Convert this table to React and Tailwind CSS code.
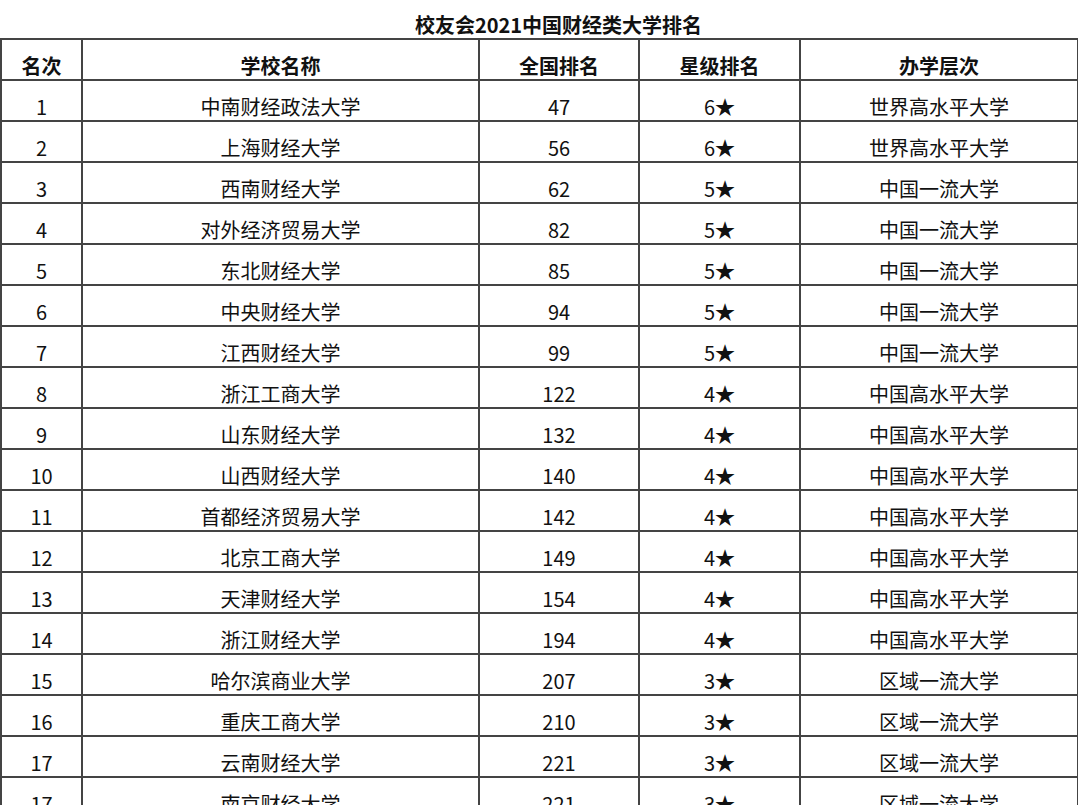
const rows = [
  ["1", "中南财经政法大学", "47", "6★", "世界高水平大学"],
  ["2", "上海财经大学", "56", "6★", "世界高水平大学"],
  ["3", "西南财经大学", "62", "5★", "中国一流大学"],
  ["4", "对外经济贸易大学", "82", "5★", "中国一流大学"],
  ["5", "东北财经大学", "85", "5★", "中国一流大学"],
  ["6", "中央财经大学", "94", "5★", "中国一流大学"],
  ["7", "江西财经大学", "99", "5★", "中国一流大学"],
  ["8", "浙江工商大学", "122", "4★", "中国高水平大学"],
  ["9", "山东财经大学", "132", "4★", "中国高水平大学"],
  ["10", "山西财经大学", "140", "4★", "中国高水平大学"],
  ["11", "首都经济贸易大学", "142", "4★", "中国高水平大学"],
  ["12", "北京工商大学", "149", "4★", "中国高水平大学"],
  ["13", "天津财经大学", "154", "4★", "中国高水平大学"],
  ["14", "浙江财经大学", "194", "4★", "中国高水平大学"],
  ["15", "哈尔滨商业大学", "207", "3★", "区域一流大学"],
  ["16", "重庆工商大学", "210", "3★", "区域一流大学"],
  ["17", "云南财经大学", "221", "3★", "区域一流大学"],
  ["17", "南京财经大学", "221", "3★", "区域一流大学"],
];

const headers = ["名次", "学校名称", "全国排名", "星级排名", "办学层次"];

const App = () => {
  return (
    <div
      className="w-[1078px] h-[805px] overflow-hidden bg-white text-[#111]"
      style={{ fontFamily: '"Noto Sans CJK SC", "Noto Sans", sans-serif' }}
    >
      <h1 className="h-[38px] pl-[40px] w-[1077px] text-center text-[20px] font-bold leading-[26px] pt-[12px]">
        校友会2021中国财经类大学排名
      </h1>
      <table className="w-[1077px] table-fixed border-collapse text-[20px]">
        <colgroup>
          <col className="w-[81px]" />
          <col className="w-[397px]" />
          <col className="w-[160px]" />
          <col className="w-[161px]" />
          <col className="w-[278px]" />
        </colgroup>
        <thead>
          <tr className="h-[41px]">
            {headers.map((h) => (
              <th
                key={h}
                className="border-2 border-[#444] text-center align-bottom font-bold leading-[24px] p-0 pb-[1px]"
              >
                {h}
              </th>
            ))}
          </tr>
        </thead>
        <tbody>
          {rows.map((r, i) => (
            <tr key={i} className="h-[41px]">
              {r.map((c, j) => (
                <td
                  key={j}
                  className="border-2 border-[#444] text-center align-bottom leading-[24px] p-0 pb-[1px]"
                >
                  {c}
                </td>
              ))}
            </tr>
          ))}
        </tbody>
      </table>
    </div>
  );
};

export default App;
